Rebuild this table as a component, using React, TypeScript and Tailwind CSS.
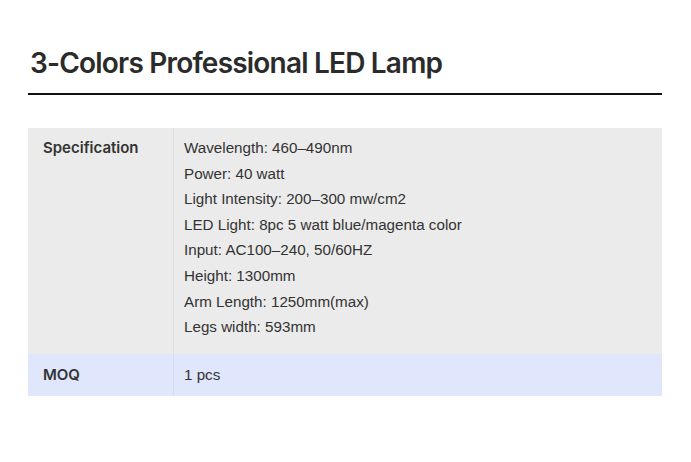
const specs = [
  'Wavelength: 460–490nm',
  'Power: 40 watt',
  'Light Intensity: 200–300 mw/cm2',
  'LED Light: 8pc 5 watt blue/magenta color',
  'Input: AC100–240, 50/60HZ',
  'Height: 1300mm',
  'Arm Length: 1250mm(max)',
  'Legs width: 593mm',
];

export default function App() {
  return (
    <main className="min-h-screen w-[691px] h-[462px] bg-white px-[28px] pt-[43px]">
      {/* Title */}
      <h1 className="font-['Inter',sans-serif] text-[28px] leading-[40px] font-semibold tracking-[-0.8px] text-[#2b2b2b] pl-[2px]">
        3-Colors Professional LED Lamp
      </h1>
      <div className="mt-[10px] h-[2px] w-[634px] bg-[#111]" />

      {/* Spec table */}
      <div className="mt-[33px] w-[634px] font-['Liberation_Sans',Arial,sans-serif] text-[15.2px] text-[#333]">
        <div className="flex bg-[#ebebeb]">
          <div className="w-[146px] border-r border-[#dedede] pl-[15px] pt-[7px] font-['Inter',sans-serif] font-semibold text-[15px] leading-[25.6px] text-[#333]">
            Specification
          </div>
          <div className="flex-1 pl-[10px] pt-[7px] pb-[14px] leading-[25.6px]">
            {specs.map((s) => (
              <div key={s}>{s}</div>
            ))}
          </div>
        </div>
        <div className="flex bg-[#e0e6fc]">
          <div className="w-[146px] border-r border-[#d6dcf2] pl-[15px] pt-[8px] pb-[9px] font-['Inter',sans-serif] font-semibold text-[15px] leading-[25.6px]">
            MOQ
          </div>
          <div className="flex-1 pl-[10px] pt-[8px] pb-[9px] leading-[25.6px]">1 pcs</div>
        </div>
      </div>
    </main>
  );
}
